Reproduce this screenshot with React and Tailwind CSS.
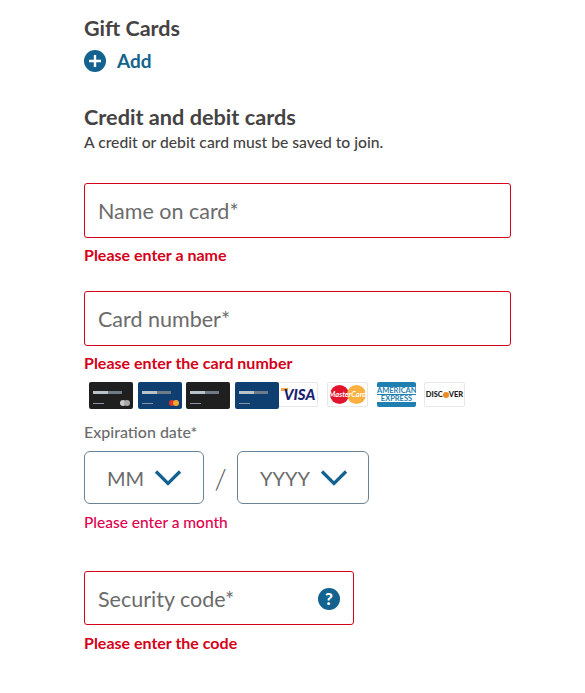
const font = "font-['Lato','Liberation_Sans',sans-serif]";

const PlaceholderField = ({ label, error }) => (
  <div>
    <div className="h-[55px] w-[427px] rounded-[3px] border border-[#d5001a] flex items-center pl-[13px] pt-[2px] text-[21.5px] text-[#6b6b6b]">
      {label}
    </div>
    <p className="mt-[7px] h-[20px] text-[16px] leading-[20px] font-bold text-[#d5001a]">{error}</p>
  </div>
);

const Chevron = () => (
  <svg width="28" height="17" viewBox="0 0 28 17" fill="none" className="ml-[10px]">
    <path d="M2 2.5l12 12 12-12" stroke="#14628f" strokeWidth="3.2" />
  </svg>
);

const SelectBox = ({ value, className }) => (
  <div className={`h-[53px] rounded-[6px] border border-[#6a8293] flex items-center text-[20px] text-[#6b6b6b] ${className}`}>
    <span>{value}</span>
    <Chevron />
  </div>
);

const BankCard = ({ dark, chip }) => (
  <div className={`relative w-[44px] h-[27px] rounded-[2px] ${dark ? "bg-[#1f1f1f]" : "bg-[#0f3f70]"}`}>
    <div className="absolute left-[4px] top-[9px] w-[15px] h-[3px] bg-[#b9c1c9] blur-[0.5px]" />
    <div className="absolute left-[19px] top-[9px] w-[14px] h-[3px] bg-[#6f7c88] blur-[0.5px]" />
    <div className="absolute left-[4px] top-[21px] w-[11px] h-[1px] bg-[#8a94a0] blur-[0.3px]" />
    {chip && (
      <div className="absolute right-[3px] bottom-[3px] flex">
        <span className={`w-[6px] h-[6px] rounded-full ${dark ? "bg-[#c9c9c9]" : "bg-[#e2342c]"}`} />
        <span className={`w-[6px] h-[6px] rounded-full -ml-[2px] ${dark ? "bg-[#a9a9a9]" : "bg-[#f5a733]"}`} />
      </div>
    )}
  </div>
);

const BrandBox = ({ className, children }) => (
  <div className={`h-[25px] rounded-[2px] border border-[#e8e8e8] flex items-center justify-center overflow-hidden ${className}`}>
    {children}
  </div>
);

export default function App() {
  return (
    <div className={`${font} w-[585px] h-[693px] bg-white pl-[84px] pt-[15px] overflow-hidden`}>
      <h2 className="text-[21.5px] leading-[26px] font-bold text-[#444242]">Gift Cards</h2>

      <div className="mt-[8px] flex items-center gap-[11px]">
        <svg width="22" height="22" viewBox="0 0 22 22">
          <circle cx="11" cy="11" r="11" fill="#14628f" />
          <path d="M11 5v12M5 11h12" stroke="#fff" strokeWidth="2.4" />
        </svg>
        <span className="text-[19px] leading-[24px] font-bold text-[#14628f]">Add</span>
      </div>

      <h2 className="mt-[31px] text-[21.7px] leading-[26px] font-bold text-[#444242]">Credit and debit cards</h2>
      <p className="mt-[2px] text-[15.7px] leading-[20px] font-medium text-[#444242]">A credit or debit card must be saved to join.</p>

      <div className="mt-[31px] flex flex-col gap-[26px]">
        <PlaceholderField label="Name on card*" error="Please enter a name" />
        <PlaceholderField label="Card number*" error="Please enter the card number" />
      </div>

      <div className="mt-[9px] ml-[5px] flex items-start h-[27px]">
        <BankCard dark chip />
        <div className="ml-[5px]"><BankCard chip /></div>
        <div className="ml-[4px]"><BankCard dark /></div>
        <div className="ml-[5px]"><BankCard /></div>
        <BrandBox className="w-[40px] -ml-[1px] bg-white">
          <span className="relative text-[15px] font-black italic text-[#1a1f71] pl-[3px]">
            <span className="absolute left-0 top-[5px] w-[7px] h-[3px] bg-[#f2a33a] -skew-x-12" />
            <span className="relative">VISA</span>
          </span>
        </BrandBox>
        <BrandBox className="w-[41px] ml-[9px] bg-white">
          <div className="relative flex">
            <span className="w-[19px] h-[19px] rounded-full bg-[#e2132d]" />
            <span className="w-[19px] h-[19px] rounded-full bg-[#fbb040] -ml-[2px]" />
            <span className="absolute inset-0 flex items-center justify-center text-[7.5px] font-bold italic text-white">MasterCard</span>
          </div>
        </BrandBox>
        <BrandBox className="w-[39px] ml-[9px] bg-[#1f7fb0] border-0 flex-col gap-[1px]">
          <span className="w-full text-center bg-white text-[7.5px] font-bold text-[#1f7fb0] leading-[7px]">AMERICAN</span>
          <span className="w-full text-center bg-white text-[7.5px] font-bold text-[#1f7fb0] leading-[7px]">EXPRESS</span>
        </BrandBox>
        <BrandBox className="w-[41px] ml-[8px] bg-white">
          <span className="flex items-center text-[7.5px] font-black text-[#222]">
            DISC<span className="w-[6px] h-[6px] rounded-full bg-[#f08a24]" />VER
          </span>
        </BrandBox>
      </div>

      <p className="mt-[13px] text-[16px] leading-[20px] font-medium text-[#6b6b6b]">Expiration date*</p>

      <div className="mt-[9px] flex items-center">
        <SelectBox value="MM" className="w-[120px] pl-[22px]" />
        <span className="w-[33px] text-center text-[28px] leading-none font-light text-[#555]">/</span>
        <SelectBox value="YYYY" className="w-[132px] pl-[22px]" />
      </div>

      <p className="mt-[8px] text-[15.5px] leading-[20px] font-medium text-[#e0004d]">Please enter a month</p>

      <div className="mt-[39px] relative w-[270px] h-[54px] rounded-[3px] border border-[#d5001a] flex items-center pl-[13px] pt-[2px] text-[21.5px] text-[#6b6b6b]">
        Security code*
        <div className="absolute right-[13px] top-[16px] w-[22px] h-[22px] rounded-full bg-[#14628f] flex items-center justify-center text-white text-[17px] font-black">?</div>
      </div>
      <p className="mt-[8px] text-[16px] leading-[20px] font-bold text-[#d5001a]">Please enter the code</p>
    </div>
  );
}
